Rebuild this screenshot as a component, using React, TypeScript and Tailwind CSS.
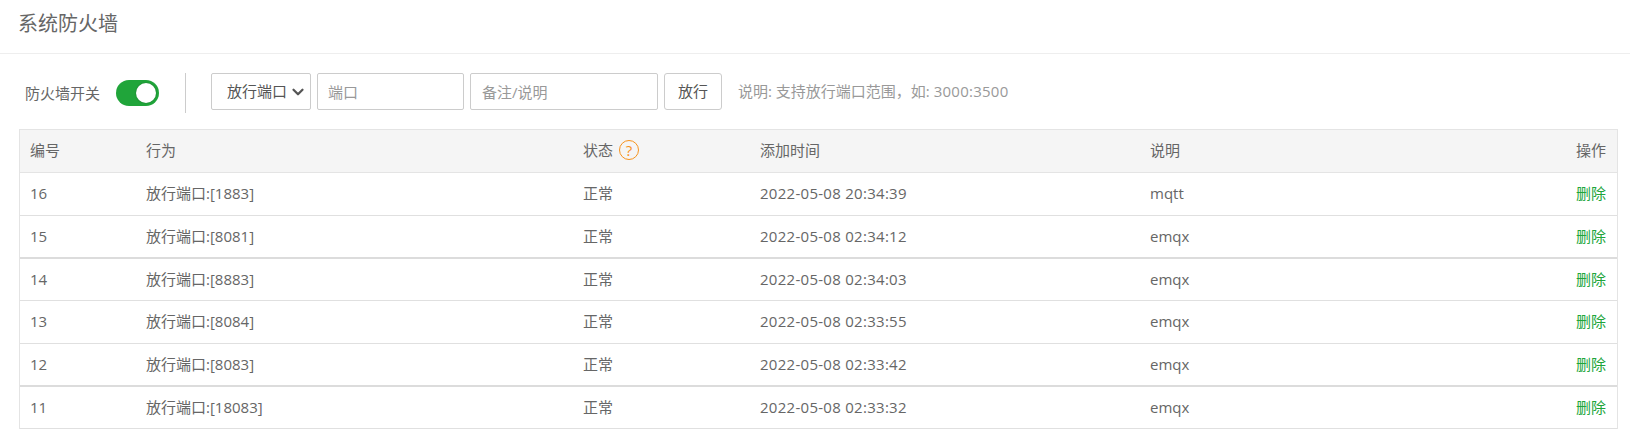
import { ChevronDown } from 'lucide-react'

const rows = [
  { id: 16, port: '1883', time: '2022-05-08 20:34:39', note: 'mqtt', line: 'h-[43px] pb-[2px] border-b border-[#e0e0e0]' },
  { id: 15, port: '8081', time: '2022-05-08 02:34:12', note: 'emqx', line: 'h-[43px] pb-[1px] border-b-2 border-[#dcdcdc]' },
  { id: 14, port: '8883', time: '2022-05-08 02:34:03', note: 'emqx', line: 'h-[42px] pb-[1px] border-b border-[#e0e0e0]' },
  { id: 13, port: '8084', time: '2022-05-08 02:33:55', note: 'emqx', line: 'h-[43px] pb-[1px] border-b border-[#e0e0e0]' },
  { id: 12, port: '8083', time: '2022-05-08 02:33:42', note: 'emqx', line: 'h-[43px] pb-[1px] border-b-2 border-[#dcdcdc]' },
  { id: 11, port: '18083', time: '2022-05-08 02:33:32', note: 'emqx', line: 'h-[42px] pb-[1px] border-b border-[#e0e0e0]' },
]

const grid = 'grid grid-cols-[116px_437px_177px_390px_1fr] items-center pl-[10px] pr-[11px]'

export default function App() {
  return (
    <div className="h-[430px] overflow-hidden bg-white font-['Open_Sans','Noto_Sans_CJK_SC',sans-serif] text-[15px] text-[#666]">
      {/* Header */}
      <div className="h-[54px] border-b border-[#eee] pl-[18px] pt-[9px] text-[20px] leading-[30px] text-[#666]">系统防火墙</div>

      {/* Toolbar */}
      <div className="flex h-[75px] items-start pl-[25px] pt-[19px]">
        <div className="flex h-[40px] items-center">
          <span className="text-[#666]">防火墙开关</span>
          <div className="ml-[16px] flex h-[26px] w-[43px] items-center justify-end rounded-full bg-[#20a53a] pr-[3px]">
            <div className="h-[20px] w-[20px] rounded-full bg-white shadow-[0_0_2px_rgba(0,0,0,0.3)]" />
          </div>
        </div>
        <div className="ml-[26px] h-[40px] w-px bg-[#ccc]" />
        <div className="ml-[25px] flex items-center">
          <div className="flex h-[37px] w-[100px] items-center rounded-[2px] border border-[#ccc] pl-[15px] text-[#555]">
            <span className="whitespace-nowrap">放行端口</span>
            <ChevronDown className="ml-[2px] h-[18px] w-[18px] shrink-0 text-[#555]" strokeWidth={3} />
          </div>
          <input placeholder="端口" className="ml-[6px] h-[37px] w-[147px] rounded-[2px] border border-[#ccc] px-[10px] placeholder:text-[#999]" />
          <input placeholder="备注/说明" className="ml-[6px] h-[37px] w-[188px] rounded-[2px] border border-[#ccc] px-[11px] placeholder:text-[#999]" />
          <button className="ml-[6px] h-[37px] w-[58px] rounded-[3px] border border-[#ccc] text-[#555]">放行</button>
          <span className="ml-[16px] text-[#999]">
            说明: 支持放行端口范围，如: <span className="tracking-[0.25px]">3000:3500</span>
          </span>
        </div>
      </div>

      {/* Table */}
      <div className="ml-[19px] w-[1599px] border-x border-t border-[#e4e4e4]">
        <div className={`${grid} h-[43px] pb-[2px] border-b border-[#e4e4e4] bg-[#f5f5f5]`}>
          <span>编号</span>
          <span>行为</span>
          <span className="flex items-center gap-[6px]">
            状态
            <span className="flex h-[20px] w-[20px] items-center justify-center rounded-full border border-[#f7931e] text-[15px] leading-none text-[#f7931e]">?</span>
          </span>
          <span>添加时间</span>
          <div className="flex justify-between">
            <span>说明</span>
            <span>操作</span>
          </div>
        </div>
        {rows.map((row) => (
          <div key={row.id} className={`${grid} ${row.line}`}>
            <span>{row.id}</span>
            <span>
              放行端口:[{row.port}]
            </span>
            <span>正常</span>
            <span className="tracking-[0.28px]">{row.time}</span>
            <div className="flex justify-between">
              <span>{row.note}</span>
              <span className="text-[#20a53a]">删除</span>
            </div>
          </div>
        ))}
      </div>
    </div>
  )
}
